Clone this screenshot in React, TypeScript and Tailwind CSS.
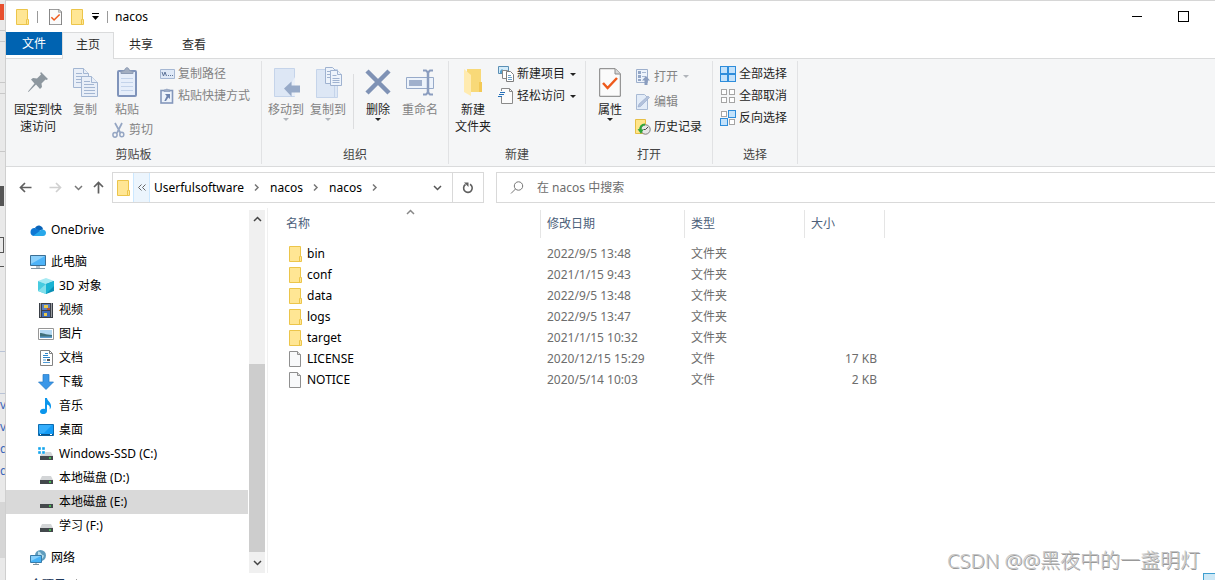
import type { ReactNode } from 'react';

interface FileRow {
  name: string;
  date: string;
  folder: boolean;
  size?: string;
}

interface NavEntry {
  label: string;
  icon: ReactNode;
  nested?: boolean;
  selected?: boolean;
  spaced?: boolean;
}

const files: FileRow[] = [
  { name: 'bin', date: '2022/9/5 13:48', folder: true },
  { name: 'conf', date: '2021/1/15 9:43', folder: true },
  { name: 'data', date: '2022/9/5 13:48', folder: true },
  { name: 'logs', date: '2022/9/5 13:47', folder: true },
  { name: 'target', date: '2021/1/15 10:32', folder: true },
  { name: 'LICENSE', date: '2020/12/15 15:29', folder: false, size: '17 KB' },
  { name: 'NOTICE', date: '2020/5/14 10:03', folder: false, size: '2 KB' }
];

/* ---------- icons ---------- */

function Folder() {
  return (
    <svg width="14" height="16" viewBox="0 0 14 16" fill="none" className="shrink-0">
      <path d="M.5.5h11v10h1v5H.5z" fill="#ffe694" stroke="#ecc54a" />
      <path d="M10.5 15.5v-5h1" stroke="#ecc54a" />
    </svg>
  );
}

function Page() {
  return (
    <svg width="14" height="16" viewBox="0 0 14 16" fill="none" className="shrink-0">
      <path d="M.5.5h8l3 3v12H.5z" fill="#f8f9fa" stroke="#8f8f8f" />
      <path d="M8.5.5v3h3" fill="#ddd" stroke="#8f8f8f" />
    </svg>
  );
}

function CheckedPage({ big }: { big?: boolean }) {
  return (
    <svg width={big ? 22 : 13} height={big ? 29 : 16} viewBox="0 0 22 29" preserveAspectRatio="none" fill="none">
      <path d="M.7.7h15.6l5 5v22.6H.7z" fill="#fbfbfb" stroke="#7e7e7e" strokeWidth={big ? 1 : 1.7} />
      <path d="M16 1v5h5" fill="#d8d8d8" stroke="#8b8b8b" />
      <path d="m4 15 4.600 5L18 10" stroke="#ee5a1c" strokeWidth="2.500" />
    </svg>
  );
}

function Caret({ muted }: { muted?: boolean }) {
  return (
    <svg width="6" height="3" viewBox="0 0 6 3" className="shrink-0">
      <path d="M0 0h6L3 3z" fill={muted ? '#b0b4ba' : '#222'} />
    </svg>
  );
}

function Chevron({ dir, color = '#777' }: { dir: 'up' | 'down' | 'right'; color?: string }) {
  const paths = { up: 'm1 6 3.500-3.500L8 6', down: 'm1 3 3.500 3.500L8 3', right: 'm3 1.500 3 3-3 3' };
  return (
    <svg width="9" height="9" viewBox="0 0 9 9" fill="none" className="shrink-0">
      <path d={paths[dir]} stroke={color} strokeWidth="1.500" />
    </svg>
  );
}

function PinIcon() {
  return (
    <svg width="20" height="20" viewBox="0 0 20 20" fill="#8d979f">
      <path d="m13 0 7 7-1.500 1-1-.5-4 4 .5 3.500-2 2-4-4.500L.5 20 0 19.500 6.500 11.500 3 7.500l2-1.500 4 .5 4-4-.8-1.200z" />
    </svg>
  );
}

function CopyIcon() {
  return (
    <svg width="25" height="29" viewBox="0 0 25 29" fill="#e9eff8" stroke="#a3b6d2">
      <path d="M.5.5h10l5 5v14H.5z" />
      <path d="M10.500.5v5h5M3 5.500h6M3 8.500h10M3 11.500h10M3 14.500h10" />
      <path d="M8.500 8.500h10l6 6v14h-16z" />
      <path d="M18.500 8.500v6h6" />
      <path d="M11 13.500h6M11 16.500h10M11 19.500h11M11 22.500h11M11 25.500h11" />
    </svg>
  );
}

function PasteIcon() {
  return (
    <svg width="20" height="30" viewBox="0 0 20 30" fill="none">
      <rect x="1" y="4" width="18" height="25" rx="1" fill="#e6eefa" stroke="#7f93ba" strokeWidth="2" />
      <path d="M4 11.500h12M4 15.500h12M4 19.500h12M4 23.500h12" stroke="#c3d3ea" />
      <path d="M4 6V4.500l3.500-1C8 1.500 9 .7 10 .7s2 .8 2.500 2.800l3.500 1V6.500H4z" fill="#a2aec1" stroke="#8c9bb4" />
    </svg>
  );
}

function PathIcon() {
  return (
    <svg width="15" height="10" viewBox="0 0 15 10" fill="none">
      <path d="M.5.5h14v9H.5z" fill="#dfe9f7" stroke="#a5b7d3" />
      <path d="m2 3 1.500 4L5 3l1.500 4M8 6.500h1M10 6.500h1M12 6.500h1" stroke="#5e7499" />
    </svg>
  );
}

function ShortcutIcon() {
  return (
    <svg width="14" height="16" viewBox="0 0 14 16" fill="none">
      <rect x="1" y="2.500" width="11.500" height="12.500" fill="#edf3fb" stroke="#8497bb" strokeWidth="1.600" />
      <path d="M4 3.500V2l2-.3C6.200.7 7.600.7 8 1.700L10 2v1.500z" fill="#a0aec5" stroke="#8497bb" strokeWidth=".6" />
      <path d="M5 6h5v5L8.300 9.500 6 13H4.300l2.400-5z" fill="#6e84ae" />
    </svg>
  );
}

function ScissorsIcon() {
  return (
    <svg width="13" height="16" viewBox="0 0 13 16" fill="none" stroke="#95a6c3">
      <path d="m3 1 5.500 10M10 1 5 11" strokeWidth="1.700" />
      <ellipse cx="3" cy="12.800" rx="2.100" ry="2.400" strokeWidth="1.500" />
      <ellipse cx="9.800" cy="12.500" rx="2" ry="2.300" strokeWidth="1.500" />
    </svg>
  );
}

function MoveIcon() {
  return (
    <svg width="27" height="30" viewBox="0 0 27 30" fill="none">
      <path d="M1.500 1.500h20v28h-20z" fill="#dde7f5" stroke="#c5d4ea" />
      <path d="M19 15v14h3V10z" fill="#eaf0f9" />
      <path d="m11 21.500 7.500-7v4H27v7h-8.500v4z" fill="#97aac8" />
    </svg>
  );
}

function CopyToIcon() {
  return (
    <svg width="27" height="31" viewBox="0 0 27 31" fill="none">
      <path d="M1.500 2.500h21v28h-21z" fill="#dde7f5" stroke="#c5d4ea" />
      <path d="M19.500 18v12" stroke="#c5d4ea" />
      <g fill="#edf3fb" stroke="#9fb2d0">
        <path d="M10.500.5h7l4 4v12h-11z" />
        <path d="M12 4.500h5M12 7.500h5M12 10.500h5" />
        <path d="M15.500 3.500h7l4 4v11h-11z" />
        <path d="M22.500 3.500v4h4M17.500 8.500h4M17.500 11.500h7M17.500 13.500h7M17.500 15.500h7" />
      </g>
    </svg>
  );
}

function DeleteIcon() {
  return (
    <svg width="26" height="26" viewBox="0 0 26 26" fill="none" stroke="#7f92b5" strokeWidth="4.500">
      <path d="m2 2 22 22M24 2 2 24" />
    </svg>
  );
}

function RenameIcon() {
  return (
    <svg width="28" height="27" viewBox="0 0 28 27" fill="none">
      <path d="M.5 8.500h27v11H.5z" fill="#edf3fb" stroke="#97aac9" />
      <path d="M3 11h13v6H3z" fill="#a0b0cc" />
      <path d="M17 1.500h3l2 2 2-2h3M17 25.500h3l2-2 2 2h3" stroke="#8b9dbf" strokeWidth="2" />
      <path d="M22 3v21" stroke="#8b9dbf" strokeWidth="2.500" />
    </svg>
  );
}

function NewFolderIcon() {
  return (
    <svg width="20" height="29" viewBox="0 0 20 29">
      <path d="M4 1h14v14h1v9H4z" fill="#f8d978" />
      <path d="M1 1l7 6v21l-7-4z" fill="#ffebb0" />
      <path d="M16 14h3v10h-3z" fill="#f3c956" />
    </svg>
  );
}

function NewItemIcon() {
  return (
    <svg width="16" height="16" viewBox="0 0 16 16" fill="none">
      <path d="M.5.5h10v7H.5z" fill="#d4ecfa" stroke="#5a8fb5" />
      <path d="M2 5l2-2 2 2 2-1 2 3H2z" fill="#54a0cc" />
      <path d="M4.500 4.500h5v8h-5z" fill="#fff" stroke="#888" />
      <path d="M8.500 5.500h4l3 3v7h-7z" fill="#fff" stroke="#7d7d7d" />
      <path d="M10 9.500h3M10 11.500h4M10 13.500h4" stroke="#6aa0c8" />
    </svg>
  );
}

function EasyAccessIcon() {
  return (
    <svg width="16" height="16" viewBox="0 0 16 16" fill="none">
      <path d="M3.500.5h8l3 3v12h-11z" fill="#fbfbfb" stroke="#8a8a8a" />
      <path d="M11.500.5v3h3" stroke="#8a8a8a" />
      <path d="M0 3h8v6H0z" fill="#f9f9fa" />
      <path d="M2 4.500h5M1 6.500h5M0 8.500h4" stroke="#2670b8" strokeWidth="1.200" />
    </svg>
  );
}

function OpenIcon() {
  return (
    <svg width="14" height="16" viewBox="0 0 14 16" fill="none">
      <path d="M.5.5h11v13H.5z" fill="#edf3fb" stroke="#9dafcc" />
      <path d="M2 2h3v3H2zM2 6h3v3H2zM2 10h3v2H2z" fill="#93a6c6" />
      <path d="M6 3.500h4M6 7.500h4" stroke="#a8b8d2" />
      <path d="m10 7 4 4.500h-2.500V16h-3v-4.500H6z" fill="#8a9dbf" />
    </svg>
  );
}

function EditIcon() {
  return (
    <svg width="14" height="16" viewBox="0 0 14 16" fill="none">
      <path d="M.5.5h8l3 3v12H.5z" fill="#e3ecf8" stroke="#a9bad4" />
      <path d="m2 13 1-3 9-8 1.500 1.500-9 9z" fill="#b3c2dc" stroke="#95a8c9" strokeWidth=".6" />
    </svg>
  );
}

function HistoryIcon() {
  return (
    <svg width="16" height="16" viewBox="0 0 16 16" fill="none">
      <path d="M.5.5h10v14H.5z" fill="#ffe58a" stroke="#e7bf45" />
      <circle cx="10.500" cy="10.500" r="4.700" fill="#e6e6e6" stroke="#7d7d7d" />
      <path d="M10.500 10.500 13 8M10.500 10.500h-2" stroke="#444" />
      <path d="M10 5.500C6.500 5.500 5 8 5.500 11" stroke="#30a53c" strokeWidth="2.200" />
      <path d="m2.500 10 3.500 5 2.500-4.500z" fill="#30a53c" />
    </svg>
  );
}

// mask: one character per tile, "1" for a picked tile
function TilesIcon({ mask }: { mask: string }) {
  const spots = [[0, 0], [8, 0], [0, 8], [8, 8]];
  return (
    <svg width="16" height="16" viewBox="0 0 16 16" fill="none">
      {spots.map(([x, y], i) =>
        mask[i] === '1' ? (
          <rect key={i} x={x + 0.5} y={y + 0.5} width="7" height="7" fill="#c3e2fb" stroke="#2e8ddb" />
        ) : (
          <rect key={i} x={x + 1.5} y={y + 1.5} width="5" height="5" fill="#fff" stroke="#a5a5a5" />
        )
      )}
    </svg>
  );
}

function OneDriveIcon() {
  return (
    <svg width="16" height="11" viewBox="0 0 16 11">
      <path d="M5 3C6 1 8 0 10 .7c2 .6 3 2.300 3 3.800L8 6z" fill="#0a64b8" />
      <path d="M.5 7C.5 4 3 2.500 5 3l8 4-9 4C2 11 .5 9.500.5 7z" fill="#0f78d4" />
      <path d="M3 11 11 5c1-1 4.500-.5 5 2.500C16 9.500 15 11 13 11z" fill="#28a8ea" />
    </svg>
  );
}

function ComputerIcon() {
  return (
    <svg width="16" height="16" viewBox="0 0 16 16">
      <path d="M.5 1.500h15v10H.5z" fill="#4db3f8" stroke="#3c6f94" />
      <path d="M1 2h14L1 10z" fill="#8bd0fb" />
      <path d="M6 12h4v2H6z" fill="#b8c4cc" />
      <path d="M1 14.500h14" stroke="#7d929f" />
    </svg>
  );
}

function CubeIcon() {
  return (
    <svg width="16" height="16" viewBox="0 0 16 16">
      <path d="m0 3 8-3 8 3-8 3z" fill="#a7eaf3" />
      <path d="m0 3 8 3v10l-8-3z" fill="#47cbe0" />
      <path d="m16 3-8 3v10l8-3z" fill="#0a8fb4" />
      <path d="m8 6 8-3v5l-8 8z" fill="#19b3d3" />
      <path d="m0 13 8-7v10z" fill="#82dfeb" />
    </svg>
  );
}

function VideoIcon() {
  return (
    <svg width="14" height="15" viewBox="0 0 14 15">
      <path d="M0 0h14v15H0z" fill="#3a3f47" />
      <path d="M3 1h8v6H3z" fill="#5b7fc0" />
      <path d="M3 8h8v6H3z" fill="#3d6ab5" />
      <path d="M5 2h4v3H5zM5 10h3v3H5z" fill="#e8c94c" />
      <path d="M8 5h3v2H8z" fill="#b5552f" />
      <path d="M1.500.5v14M12.500.5v14" stroke="#fff" strokeDasharray="1 1" />
    </svg>
  );
}

function PictureIcon() {
  return (
    <svg width="16" height="12" viewBox="0 0 16 12">
      <path d="M.5.5h15v11H.5z" fill="#fff" stroke="#969696" />
      <path d="M2 2h12v8H2z" fill="#b4d9f3" />
      <path d="M2 5c3 0 5 1.500 12 2v3H2z" fill="#3f6f79" />
      <path d="M2 8.500h12V10H2z" fill="#5d9ccc" />
    </svg>
  );
}

function DocumentIcon() {
  return (
    <svg width="13" height="16" viewBox="0 0 13 16" fill="none">
      <path d="M.5.5h9l3 3v12H.5z" fill="#fff" stroke="#838383" />
      <path d="M9.500.5v3h3" stroke="#838383" />
      <path d="M5 3.500h3M3 5.500h5M3 7.500h7" stroke="#2f86ca" />
      <path d="M3 10h3M3 12.500h7" stroke="#4f9bd6" />
      <path d="M7 9h3v2H7z" fill="#555" />
    </svg>
  );
}

function DownloadIcon() {
  return (
    <svg width="16" height="16" viewBox="0 0 16 16">
      <path d="M5 .5h6v7.500h4.500L8 15.500.5 8H5z" fill="#3a97e8" stroke="#2478c4" strokeWidth=".7" />
    </svg>
  );
}

function MusicIcon() {
  return (
    <svg width="12" height="16" viewBox="0 0 12 16" fill="#0b96ec">
      <path d="M5 0h2c0 3 4.500 4 4 9-.3 1-.7 2-1.500 2.500C10.500 8.500 9 7 7 6.500V13c0 4-7 4-7 .5 0-2 2.500-3.500 5-2.500z" />
    </svg>
  );
}

function DesktopIcon() {
  return (
    <svg width="16" height="12" viewBox="0 0 16 12">
      <path d="M.5.5h15v11H.5z" fill="#129bf5" stroke="#0d6cb0" />
      <path d="M1 1h13L6 9H1z" fill="#35aefc" />
      <path d="M1 10h14v1.500H1z" fill="#0a5288" />
      <path d="M2 10.500h1M12 10.500h2" stroke="#fff" />
    </svg>
  );
}

function DriveIcon({ system }: { system?: boolean }) {
  return (
    <svg width="16" height="14" viewBox="0 0 16 14">
      <path d="M4 5h9l2 4H2z" fill="#d3d5d7" />
      <path d="M2 9h13v4H2z" fill="#43484c" />
      <path d="M11 11h2" stroke="#45dc52" strokeWidth="1.400" />
      {system && <path d="M0 0h3v3H0zM4 0h3v3H4zM0 4h3v3H0zM4 4h3v3H4z" fill="#12a5ee" stroke="#fff" strokeWidth=".4" />}
    </svg>
  );
}

function NetworkIcon() {
  return (
    <svg width="16" height="16" viewBox="0 0 16 16">
      <circle cx="10.500" cy="5.500" r="5.500" fill="#5f9cbd" />
      <path d="M8 1.500c3 0 3 3 5 3.500s0 3-1 4L8 5z" fill="#b5dcea" />
      <path d="M.5 5.500h11v7H.5z" fill="#45b2f7" stroke="#387ba8" />
      <path d="M1 6h10L1 11z" fill="#86cffb" />
      <path d="M3 14.500h6M6 13v1.500" stroke="#7b929e" />
    </svg>
  );
}

function Arrow({ dir, color }: { dir: 'left' | 'right' | 'up'; color: string }) {
  const paths = { left: 'M12.500 6.500H1.500M6 2 1.500 6.500 6 11', right: 'M.5 6.500h11M7 2l4.500 4.500L7 11', up: 'M6.500 12.500V1.500M2 6l4.500-4.500L11 6' };
  return (
    <svg width="13" height="13" viewBox="0 0 13 13" fill="none">
      <path d={paths[dir]} stroke={color} strokeWidth="1.700" />
    </svg>
  );
}

/* ---------- ribbon ---------- */

function RibbonGroup({ label, className, children }: { label: string; className: string; children: ReactNode }) {
  return (
    <section aria-label={label} className={`flex flex-col pt-1 ${className}`}>
      <div className="flex h-[83px] items-start">{children}</div>
      <div className="text-center leading-[17px] text-[#444]">{label}</div>
    </section>
  );
}

function Rule() {
  return <div className="my-[2px] w-px shrink-0 bg-[#e1e2e4]"></div>;
}

interface BigButtonProps {
  icon: ReactNode;
  lines: string[];
  className: string;
  muted?: boolean;
  menu?: boolean;
}

function BigButton({ icon, lines, className, muted, menu }: BigButtonProps) {
  return (
    <button className={`flex shrink-0 flex-col items-center pt-[3px] leading-[17px] ${muted ? 'text-[#838383]' : 'text-[#1e1e1e]'} ${className}`}>
      <span className="mb-[3px] flex h-8 items-center">{icon}</span>
      {lines.map((line) => (
        <span key={line} className="whitespace-nowrap">{line}</span>
      ))}
      {menu && <Caret muted={muted} />}
    </button>
  );
}

function SmallButton({ icon, label, className, muted, menu }: { icon: ReactNode; label: string; className: string; muted?: boolean; menu?: boolean }) {
  return (
    <button className={`flex items-center whitespace-nowrap ${muted ? 'text-[#838383]' : 'text-[#1e1e1e]'} ${className}`}>
      <span className="mr-[3px] flex w-4 justify-center">{icon}</span>
      {label}
      {menu && <span className="ml-[5px]"><Caret muted={muted} /></span>}
    </button>
  );
}

function Ribbon() {
  return (
    <div className="flex h-[108px] shrink-0 border-b border-[#dadbdc] bg-[#f5f6f7]">
      <RibbonGroup label="剪贴板" className="w-[255px]">
        <BigButton icon={<PinIcon />} lines={['固定到快', '速访问']} className="w-16" />
        <BigButton icon={<CopyIcon />} lines={['复制']} className="w-[30px]" muted />
        <div className="w-[54px]">
          <BigButton icon={<PasteIcon />} lines={['粘贴']} className="w-full" muted />
          <SmallButton icon={<ScissorsIcon />} label="剪切" className="ml-[10px] h-6" muted />
        </div>
        <div className="pl-[5px]">
          <SmallButton icon={<PathIcon />} label="复制路径" className="h-[22px]" muted />
          <SmallButton icon={<ShortcutIcon />} label="粘贴快捷方式" className="h-[22px]" muted />
        </div>
      </RibbonGroup>
      <Rule />
      <RibbonGroup label="组织" className="w-[186px] px-[3px]">
        <BigButton icon={<MoveIcon />} lines={['移动到']} className="w-[42px]" muted menu />
        <BigButton icon={<CopyToIcon />} lines={['复制到']} className="w-[42px]" muted menu />
        <div className="mx-1 mt-[11px] h-[55px] w-px bg-[#dcdddf]"></div>
        <BigButton icon={<DeleteIcon />} lines={['删除']} className="w-10" menu />
        <BigButton icon={<RenameIcon />} lines={['重命名']} className="w-11" muted />
      </RibbonGroup>
      <Rule />
      <RibbonGroup label="新建" className="w-[136px]">
        <BigButton icon={<NewFolderIcon />} lines={['新建', '文件夹']} className="w-12" />
        <div className="pl-px">
          <SmallButton icon={<NewItemIcon />} label="新建项目" className="h-[22px]" menu />
          <SmallButton icon={<EasyAccessIcon />} label="轻松访问" className="h-[22px]" menu />
        </div>
      </RibbonGroup>
      <Rule />
      <RibbonGroup label="打开" className="w-[126px]">
        <BigButton icon={<CheckedPage big />} lines={['属性']} className="w-12" menu />
        <div className="pl-px pt-px">
          <SmallButton icon={<OpenIcon />} label="打开" className="h-[25px]" muted menu />
          <SmallButton icon={<EditIcon />} label="编辑" className="h-[25px]" muted />
          <SmallButton icon={<HistoryIcon />} label="历史记录" className="h-[25px]" />
        </div>
      </RibbonGroup>
      <Rule />
      <RibbonGroup label="选择" className="w-[84px]">
        <div className="pl-[7px]">
          <SmallButton icon={<TilesIcon mask="1111" />} label="全部选择" className="h-[22px]" />
          <SmallButton icon={<TilesIcon mask="0000" />} label="全部取消" className="h-[22px]" />
          <SmallButton icon={<TilesIcon mask="0110" />} label="反向选择" className="h-[22px]" />
        </div>
      </RibbonGroup>
      <Rule />
    </div>
  );
}

/* ---------- window parts ---------- */

function TitleBar() {
  return (
    <header className="flex h-[31px] shrink-0 items-center pl-[10px] pr-[9px] text-black">
      <Folder />
      <span className="ml-[7px] mr-[11px] h-3 w-px bg-[#9a9a9a]"></span>
      <button aria-label="属性"><CheckedPage /></button>
      <button aria-label="新建文件夹" className="ml-[9px]"><Folder /></button>
      <button aria-label="自定义快速访问工具栏" className="ml-[7px]">
        <svg width="7" height="7" viewBox="0 0 7 7">
          <path d="M0 0h7v1H0zM0 3h7L3.500 7z" />
        </svg>
      </button>
      <span className="ml-2 mr-[7px] h-3 w-px bg-[#9a9a9a]"></span>
      <h1 className="flex-1">nacos</h1>
      <button aria-label="最小化" className="flex w-[46px] justify-center"><span className="h-px w-[10px] bg-black"></span></button>
      <button aria-label="最大化" className="flex w-[46px] justify-center"><span className="size-[11px] border border-black"></span></button>
    </header>
  );
}

function Tabs() {
  return (
    <nav className="flex h-[27px] shrink-0 border-b border-[#dadbdc] text-[#2b2b2b]">
      <button className="h-[23px] w-14 bg-[#0063b1] text-white">文件</button>
      <button className="-mb-px h-[27px] w-[52px] border-x border-t border-[#dadbdc] bg-[#f5f6f7] pb-[3px]">主页</button>
      <button className="h-[26px] w-[54px]">共享</button>
      <button className="h-[26px] w-[52px]">查看</button>
    </nav>
  );
}

function AddressRow() {
  return (
    <div className="flex h-[41px] shrink-0 items-center text-black">
      <div className="flex w-[106px] items-center pl-[13px]">
        <button aria-label="后退"><Arrow dir="left" color="#5f5f5f" /></button>
        <button aria-label="前进" className="ml-[17px]"><Arrow dir="right" color="#d0d0d0" /></button>
        <button aria-label="最近浏览的位置" className="ml-[12px]"><Chevron dir="down" /></button>
        <button aria-label="上移" className="ml-[9px]"><Arrow dir="up" color="#5f5f5f" /></button>
      </div>
      <div className="flex h-[31px] w-[372px] items-center border border-[#d9d9d9]">
        <span className="ml-1 mr-[2px]"><Folder /></span>
        <button aria-label="更多位置" className="flex h-full w-[17px] items-center justify-center border-x border-[#cce8ff] bg-[#ecf5fd]">
          <svg width="8" height="7" viewBox="0 0 8 7" fill="none" stroke="#666">
            <path d="M3.500.5l-3 3 3 3M7.500.5l-3 3 3 3" />
          </svg>
        </button>
        <a href="#" className="ml-1 w-[98px]">Userfulsoftware</a>
        <Chevron dir="right" />
        <a href="#" className="ml-[9px] w-[41px]">nacos</a>
        <Chevron dir="right" />
        <a href="#" className="ml-[9px] w-[41px]">nacos</a>
        <Chevron dir="right" />
        <span className="flex-1"></span>
        <button aria-label="以前的位置" className="mr-[10px]"><Chevron dir="down" color="#555" /></button>
        <button aria-label="刷新" className="flex h-full w-[31px] items-center justify-center border-l border-[#d9d9d9]">
          <svg width="12" height="12" viewBox="0 0 12 12" fill="none">
            <path d="M8 2.300A4.300 4.300 0 1 1 3.500 2.500" stroke="#5f5f5f" strokeWidth="1.600" />
            <path d="M2 .5h4.500V5z" fill="#5f5f5f" />
          </svg>
        </button>
      </div>
      <label className="ml-3 flex h-[31px] flex-1 items-center border-y border-l border-[#d9d9d9]">
        <svg width="14" height="14" viewBox="0 0 14 14" fill="none" stroke="#777" className="ml-[13px] mr-[13px] shrink-0">
          <circle cx="8.500" cy="5" r="4.200" />
          <path d="M5.500 8 1 12.500" />
        </svg>
        <input type="search" aria-label="搜索" placeholder="在 nacos 中搜索" className="w-full outline-none placeholder:text-[#6d6d6d]" />
      </label>
    </div>
  );
}

const navEntries: NavEntry[] = [
  { label: 'OneDrive', icon: <OneDriveIcon /> },
  { label: '此电脑', icon: <ComputerIcon />, spaced: true },
  { label: '3D 对象', icon: <CubeIcon />, nested: true },
  { label: '视频', icon: <VideoIcon />, nested: true },
  { label: '图片', icon: <PictureIcon />, nested: true },
  { label: '文档', icon: <DocumentIcon />, nested: true },
  { label: '下载', icon: <DownloadIcon />, nested: true },
  { label: '音乐', icon: <MusicIcon />, nested: true },
  { label: '桌面', icon: <DesktopIcon />, nested: true },
  { label: 'Windows-SSD (C:)', icon: <DriveIcon system />, nested: true },
  { label: '本地磁盘 (D:)', icon: <DriveIcon />, nested: true },
  { label: '本地磁盘 (E:)', icon: <DriveIcon />, nested: true, selected: true },
  { label: '学习 (F:)', icon: <DriveIcon />, nested: true },
  { label: '网络', icon: <NetworkIcon />, spaced: true }
];

function Sidebar() {
  return (
    <div className="flex shrink-0 border-r border-[#f0f0f0] pr-[2px]">
      <ul className="w-[242px] pt-[10px] text-black">
        {navEntries.map((entry) => (
          <li key={entry.label} className={entry.spaced ? 'mt-2' : ''}>
            <a href="#" className={`flex h-6 items-center ${entry.nested ? 'pl-8' : 'pl-6'} ${entry.selected ? 'bg-[#d9d9d9]' : ''}`}>
              <span className="mr-[5px] flex w-4 justify-center">{entry.icon}</span>
              {entry.label}
            </a>
          </li>
        ))}
      </ul>
      <div className="ml-px mt-[2px] flex w-4 flex-col items-center bg-[#f0f0f0]">
        <div className="flex h-[18px] items-center"><Chevron dir="up" color="#444" /></div>
        <div className="flex-1"></div>
        <div className="h-[188px] w-full bg-[#cdcdcd]"></div>
        <div className="flex h-[21px] items-center"><Chevron dir="down" color="#444" /></div>
      </div>
    </div>
  );
}

function HeadCell({ label, sorted, className }: { label: string; sorted?: boolean; className: string }) {
  return (
    <th scope="col" className={`p-0 pt-[2px] align-top font-normal ${className}`}>
      <div className="relative flex h-7 items-center border-r border-[#e5e5e5] text-[#4c607a]">
        <span className={sorted ? 'pl-[18px]' : 'pl-[6px]'}>{label}</span>
        {sorted && <span className="absolute inset-x-0 -top-[2px] flex justify-center pl-3"><Chevron dir="up" color="#888" /></span>}
      </div>
    </th>
  );
}

function FileTable() {
  return (
    <table className="w-[617px] table-fixed self-start text-left text-[#6d6d6d]">
      <thead>
        <tr className="h-[35px]">
          <HeadCell label="名称" className="w-[273px]" sorted />
          <HeadCell label="修改日期" className="w-[144px]" />
          <HeadCell label="类型" className="w-[120px]" />
          <HeadCell label="大小" className="w-[80px]" />
        </tr>
      </thead>
      <tbody>
        {files.map((file) => (
          <tr key={file.name} className="h-[21px]">
            <td className="p-0 pl-[21px] text-black">
              <div className="flex items-center gap-1">
                {file.folder ? <Folder /> : <Page />}
                {file.name}
              </div>
            </td>
            <td className="p-0 pl-[6px]">{file.date}</td>
            <td className="p-0 pl-[6px]">{file.folder ? '文件夹' : '文件'}</td>
            <td className="p-0 pr-2 text-right">{file.size}</td>
          </tr>
        ))}
      </tbody>
    </table>
  );
}

// Sliver of the page that sits behind the window
function Backdrop() {
  return (
    <div aria-hidden="true" className="flex w-[6px] shrink-0 flex-col overflow-hidden border-r border-[#cfcfcf] bg-[#e9e9e9] pt-1 text-[#3b66b8]">
      <div className="h-4 w-1 bg-[#e8502f]"></div>
      <div className="mt-[10px] h-3 border-y border-[#c8c8c8]"></div>
      <div className="mt-10 h-3 border-y border-[#c8c8c8]"></div>
      <div className="mt-[57px] h-px bg-[#c8c8c8]"></div>
      <div className="mt-[34px] h-5 w-1 bg-[#555]"></div>
      <div className="mt-[31px] h-4 w-1 border-y border-r border-[#555]"></div>
      <div className="mt-[13px] h-3 w-1 border-t border-[#555]"></div>
      <div className="mt-[73px] h-px bg-[#b9c3d6]"></div>
      <div className="mt-[41px] h-px bg-[#b9c3d6]"></div>
      <div className="leading-[22px]">v</div>
      <div className="leading-[22px]">v</div>
      <div className="leading-[22px]">d</div>
      <div className="leading-[22px]">d</div>
      <div className="mt-5 h-14 bg-[#d6d6d6]"></div>
    </div>
  );
}

export default function App() {
  return (
    <div className="relative flex h-screen overflow-hidden bg-white font-['Noto_Sans','Noto_Sans_CJK_SC',sans-serif] text-[12px] leading-[16px]">
      <Backdrop />
      <div className="flex min-w-0 flex-1 flex-col border-t border-[#d6d6d6]">
        <TitleBar />
        <Tabs />
        <Ribbon />
        <AddressRow />
        <main className="flex min-h-0 flex-1">
          <Sidebar />
          <FileTable />
        </main>
        <footer className="flex h-[7px] shrink-0 items-start justify-between pl-[14px] leading-[24px] text-[#1e395b]">
          <span className="flex items-center gap-[10px]">
            7 个项目
            <span className="h-3 w-px bg-[#a0a0a0]"></span>
          </span>
          <button aria-label="详细信息" className="h-6 w-3 border border-r-0 border-[#3f9fd0] bg-[#cde8f6]"></button>
        </footer>
      </div>
      <div className="pointer-events-none absolute bottom-[5px] right-[15px] whitespace-nowrap text-[20px] leading-[28px] font-light text-[#c4c4c4] [text-shadow:1px_1px_0_#999]">
        CSDN @@黑夜中的一盏明灯
      </div>
    </div>
  );
}
